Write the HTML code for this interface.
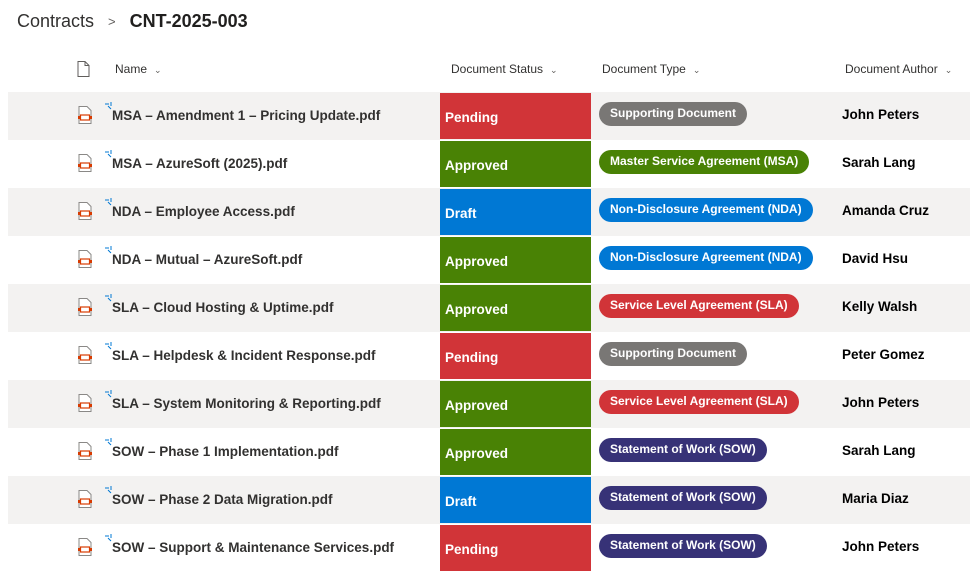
<!DOCTYPE html>
<html><head><meta charset="utf-8"><style>
*{margin:0;padding:0;box-sizing:border-box}
body{width:970px;height:574px;background:#fff;font-family:"Segoe UI","Liberation Sans",sans-serif;color:#323130;position:relative;overflow:hidden}
.bc{position:absolute;top:11px;left:17px;font-size:18px;display:flex;align-items:center}
.bc .c{color:#323130}
.bc .s{margin:0 14px 0 14px;font-size:13px;color:#605e5c}
.bc .t{font-weight:600;color:#201f1e}
.hd{position:absolute;top:62px;font-size:12px;color:#323130}
.hd i{font-style:normal;font-size:9px;color:#605e5c;margin-left:7px}
.row{position:absolute;left:8px;width:962px;height:48px}
.row.g{background:#f3f2f1}
.ic{position:absolute;left:69px;top:14px}
.nm{position:absolute;left:104px;top:16px;font-size:13.5px;font-weight:bold;color:#323130}
.nm .n{position:absolute;left:-7px;top:-6px;width:8px;height:8px}
.st{position:absolute;left:432px;top:1px;width:151px;height:46px;color:#fff;font-weight:bold;font-size:13.5px;padding:17px 0 0 5px}
.pl{position:absolute;left:591px;top:10px;height:24px;border-radius:12px;color:#fff;font-weight:bold;font-size:12px;padding:4px 11px 0}
.au{position:absolute;left:834px;top:15px;font-weight:bold;font-size:13.5px;color:#000}
.R{background:#d13438}.G{background:#498205}.B{background:#0078d4}.Y{background:#797775}.N{background:#373277}
</style></head><body>
<div class="bc"><span class="c">Contracts</span><span class="s">&gt;</span><span class="t">CNT-2025-003</span></div>
<svg style="position:absolute;left:77px;top:61px" width="13" height="16" viewBox="0 0 13 16"><path d="M1 .5h7l4 4v11H1z M8 .5v4h4" fill="none" stroke="#605e5c"/></svg>
<div class="hd" style="left:115px">Name<i>&#8964;</i></div>
<div class="hd" style="left:451px">Document Status<i>&#8964;</i></div>
<div class="hd" style="left:602px">Document Type<i>&#8964;</i></div>
<div class="hd" style="left:845px">Document Author<i>&#8964;</i></div>
<div id="rows"></div>
<script>
var d=[["MSA – Amendment 1 – Pricing Update.pdf","Pending","R","Supporting Document","Y","John Peters"],
["MSA – AzureSoft (2025).pdf","Approved","G","Master Service Agreement (MSA)","G","Sarah Lang"],
["NDA – Employee Access.pdf","Draft","B","Non-Disclosure Agreement (NDA)","B","Amanda Cruz"],
["NDA – Mutual – AzureSoft.pdf","Approved","G","Non-Disclosure Agreement (NDA)","B","David Hsu"],
["SLA – Cloud Hosting &amp; Uptime.pdf","Approved","G","Service Level Agreement (SLA)","R","Kelly Walsh"],
["SLA – Helpdesk &amp; Incident Response.pdf","Pending","R","Supporting Document","Y","Peter Gomez"],
["SLA – System Monitoring &amp; Reporting.pdf","Approved","G","Service Level Agreement (SLA)","R","John Peters"],
["SOW – Phase 1 Implementation.pdf","Approved","G","Statement of Work (SOW)","N","Sarah Lang"],
["SOW – Phase 2 Data Migration.pdf","Draft","B","Statement of Work (SOW)","N","Maria Diaz"],
["SOW – Support &amp; Maintenance Services.pdf","Pending","R","Statement of Work (SOW)","N","John Peters"]];
var h="";
d.forEach(function(r,i){
h+='<div class="row'+(i%2==0?' g':'')+'" style="top:'+(92+i*48)+'px">'+
'<svg class="ic" width="16" height="18" viewBox="0 0 16 18"><path d="M2 .5h8l4 4v13H2z" fill="#fff" stroke="#8a8886"/><rect x="3.5" y="9" width="9" height="5" fill="none" stroke="#d83b01" stroke-width="1.2"/><rect x="1" y="10" width="3" height="3" fill="#d83b01"/><rect x="12" y="10" width="3" height="3" fill="#d83b01"/></svg>'+
'<div class="nm"><svg class="n" viewBox="0 0 8 8"><path d="M0 2h4M6 0v4M3 4l3 3" stroke="#0078d4" stroke-width="1"/></svg>'+r[0]+'</div>'+
'<div class="st '+r[2]+'">'+r[1]+'</div>'+
'<div class="pl '+r[4]+'">'+r[3]+'</div>'+
'<div class="au">'+r[5]+'</div></div>';});
document.getElementById("rows").innerHTML=h;
</script>
</body></html>
